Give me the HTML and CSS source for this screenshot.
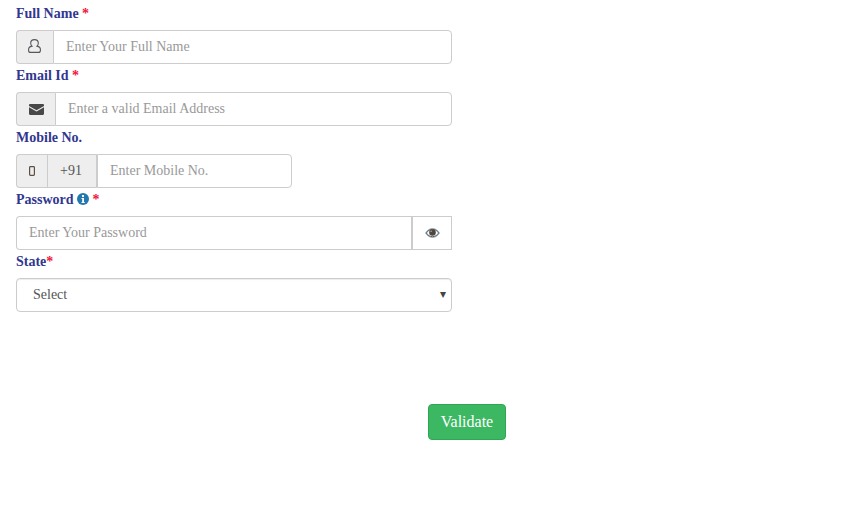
FILE: index.html
```html
<!DOCTYPE html>
<html lang="en">
<head>
  <meta charset="UTF-8" />
  <title>Registration</title>
  <link rel="stylesheet" href="styles.css">
</head>
<body>

  <form class="form-box">
    <label class="field-label">Full Name <span class="req">*</span></label>
    <div class="input-group">
      <span class="addon addon-user">
        <svg class="icon" width="13" height="14" viewBox="0 0 13 14" aria-hidden="true">
          <path d="M6.500.6C4.300.6 2.700 2.200 2.700 4.200c0 1.200.5 2.200 1.300 2.900C2 7.500.6 8.500.6 10.500v.9c0 1.200.8 2 2 2h7.800c1.200 0 2-.8 2-2v-.9c0-2-1.400-3-3.400-3.400.8-.7 1.300-1.700 1.300-2.900C10.300 2.200 8.700.6 6.500.6z" fill="none" stroke="#55585c" stroke-width="1.100"/>
        </svg>
      </span>
      <input class="text-input pad-lg" type="text" placeholder="Enter Your Full Name">
    </div>

    <label class="field-label">Email Id <span class="req">*</span></label>
    <div class="input-group">
      <span class="addon addon-mail">
        <svg class="icon" width="15" height="11" viewBox="0 0 15 11" aria-hidden="true">
          <path d="M1.200 0h12.600c.7 0 1.200.5 1.200 1.200v.9L7.500 6.300 0 2.100v-.9C0 .5.500 0 1.200 0zM0 3.300l7.500 4.200L15 3.300v6.500c0 .7-.5 1.200-1.200 1.200H1.200C.5 11 0 10.500 0 9.800z" fill="#484848"/>
        </svg>
      </span>
      <input class="text-input pad-lg" type="text" placeholder="Enter a valid Email Address">
    </div>

    <label class="field-label">Mobile No.</label>
    <div class="input-group group-short">
      <span class="addon addon-phone">
        <svg class="icon" width="6" height="10" viewBox="0 0 6 10" aria-hidden="true">
          <rect x="0.600" y="0.600" width="4.800" height="8.800" rx="0.800" fill="none" stroke="#5c5045" stroke-width="1.200"/>
        </svg>
      </span>
      <span class="addon addon-code">+91</span>
      <input class="text-input" type="text" placeholder="Enter Mobile No.">
    </div>

    <label class="field-label">Password
      <svg class="info" width="12" height="12" viewBox="0 0 12 12" aria-hidden="true">
        <circle cx="6" cy="6" r="6" fill="#2379ad"/>
        <rect x="5" y="2" width="2" height="2" fill="#fff"/>
        <path d="M4.500 5h2.500v4h.7v1H4.500V9h.7V6h-.7z" fill="#fff"/>
      </svg>
      <span class="req">*</span></label>
    <div class="input-group">
      <input class="text-input input-left" type="password" placeholder="Enter Your Password">
      <span class="eye-btn">
        <svg width="15" height="10" viewBox="0 0 15 10" aria-hidden="true">
          <path d="M.5 5C2.100 2.100 4.600.6 7.500.6s5.400 1.500 7 4.400c-1.600 2.900-4.100 4.400-7 4.400S2.100 7.900.5 5z" fill="#fff" stroke="#6b9cc2" stroke-width="0.800"/>
          <path d="M1.400 5C2.800 2.700 5 1.300 7.500 1.300s4.700 1.400 6.100 3.700C12.200 7.300 10 8.700 7.500 8.700S2.800 7.300 1.400 5z" fill="none" stroke="#4e443a" stroke-width="0.900"/>
          <circle cx="7.500" cy="4.500" r="3.300" fill="#50463e"/>
          <circle cx="6.100" cy="3.300" r="0.700" fill="#bbb"/>
        </svg>
      </span>
    </div>

    <label class="field-label">State<span class="req">*</span></label>
    <div class="select-box">
      <span>Select</span>
      <span class="caret">▾</span>
    </div>

    <div class="actions">
      <button class="validate-btn" type="button">Validate</button>
    </div>
  </form>

</body>
</html>
```

FILE: styles.css
```css
body {
  margin: 0;
  background: #fff;
  font-family: "Liberation Serif", "Times New Roman", serif;
  font-size: 14px;
  color: #555;
}

.form-box {
  width: 436px;
  padding: 2px 0 0 16px;
}

.field-label {
  display: block;
  height: 28px;
  line-height: 23px;
  font-weight: 700;
  font-size: 14px;
  color: #31378f;
}

.req {
  color: #f0143c;
}

.info {
  vertical-align: -1px;
}

.input-group {
  display: flex;
  height: 34px;
}

.group-short {
  width: 276px;
}

.addon {
  display: flex;
  align-items: center;
  justify-content: center;
  box-sizing: border-box;
  background: #eee;
  border: 1px solid #ccc;
  border-right: 0;
}

.addon:first-child {
  border-radius: 4px 0 0 4px;
}

.addon-user {
  width: 37px;
  padding: 0 1px 2px 0;
}

.addon-mail {
  width: 39px;
}

.addon-phone {
  width: 31px;
}

.addon-code {
  width: 50px;
  padding-right: 2px;
  font-size: 14px;
  border-left: 1px solid #ccc;
  border-right: 1px solid #ccc;
}

.text-input {
  flex: 1;
  min-width: 0;
  box-sizing: border-box;
  height: 34px;
  padding: 0 12px;
  border: 1px solid #ccc;
  border-radius: 0 4px 4px 0;
  font-family: inherit;
  font-size: 14px;
  color: #555;
  outline: none;
}

.text-input::placeholder {
  color: #999;
  opacity: 1;
}

.input-left {
  border-radius: 4px 0 0 4px;
  border-right-width: 2px;
}

.eye-btn {
  display: flex;
  align-items: center;
  justify-content: center;
  box-sizing: border-box;
  width: 39px;
  border: 1px solid #ccc;
  border-left: 0;
}

.select-box {
  position: relative;
  display: flex;
  align-items: center;
  box-sizing: border-box;
  height: 34px;
  padding-left: 16px;
  border: 1px solid #ccc;
  border-radius: 4px;
  box-shadow: inset 0 1px 1px rgba(0,0,0,0.075);
}

.caret {
  position: absolute;
  right: 5px;
  top: 8px;
  font-size: 12px;
  color: #444;
}

.actions {
  width: 78px;
  margin: 92px 0 0 412px;
}

.validate-btn {
  width: 78px;
  height: 36px;
  padding: 0;
  background: #3cb863;
  border: 1px solid #2fa653;
  border-radius: 4px;
  font-family: inherit;
  font-size: 16px;
  color: #fff;
}
```
